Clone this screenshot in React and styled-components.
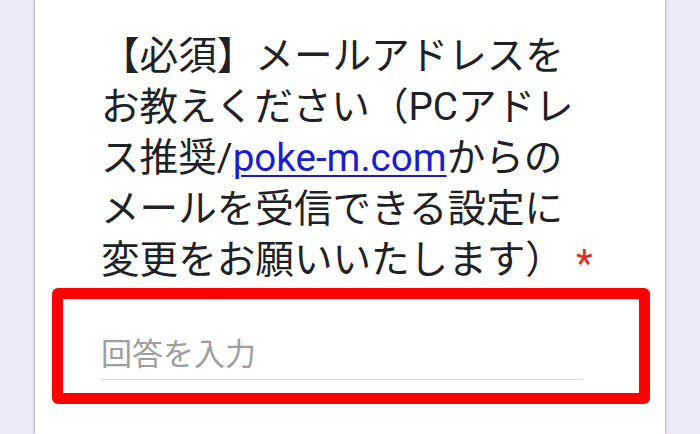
import styled, { createGlobalStyle } from "styled-components";

const GlobalStyle = createGlobalStyle`
  html, body {
    margin: 0;
    padding: 0;
    background: #ede9f7;
  }
  body {
    font-family: Roboto, "Noto Sans CJK JP", sans-serif;
    color: #202124;
  }
`;

const Page = styled.div`
  width: 700px;
  height: 434px;
  overflow: hidden;
  background: #ede9f7;
`;

const Card = styled.div`
  margin-left: 35px;
  width: 630px;
  height: 434px;
  background: #ffffff;
  box-shadow: -1px 0 2px rgba(60, 64, 67, 0.3), 1px 0 2px rgba(60, 64, 67, 0.3);
  padding-top: 30px;
  box-sizing: border-box;
`;

const Title = styled.div`
  width: 494px;
  margin-left: 66px;
  font-size: 38.6px;
  line-height: 51px;
  font-weight: 400;
`;

const Link = styled.a`
  color: #1c1ccf;
  text-decoration: underline;
  text-underline-offset: 4px;
  text-decoration-thickness: 2px;
`;

const Required = styled.span`
  display: inline-block;
  width: 0;
  line-height: 30px;
  white-space: nowrap;
  text-indent: 12px;
  vertical-align: -4px;
  color: #d93025;
`;

const Highlight = styled.div`
  margin: 3px 15px 0 17px;
  border: 11px solid #ff0000;
  border-radius: 6px;
  padding: 39px 55px 13px 38px;
`;

const Input = styled.input`
  display: block;
  width: 482px;
  height: 42px;
  padding: 0 0 8px 0;
  box-sizing: border-box;
  border: none;
  border-bottom: 1.5px solid #dadce0;
  outline: none;
  font-family: Roboto, "Noto Sans CJK JP", sans-serif;
  font-size: 31px;
  color: #202124;
  background: transparent;
  &::placeholder {
    color: #9e9e9e;
  }
`;

export default function App() {
  return (
    <>
      <GlobalStyle />
      <Page>
        <Card>
          <Title>
            【必須】メールアドレスをお教えください（PCアドレス推奨/
            <Link href="#">poke-m.com</Link>
            からのメールを受信できる設定に変更をお願いいたします）
            <Required>*</Required>
          </Title>
          <Highlight>
            <Input type="email" placeholder="回答を入力" />
          </Highlight>
        </Card>
      </Page>
    </>
  );
}
